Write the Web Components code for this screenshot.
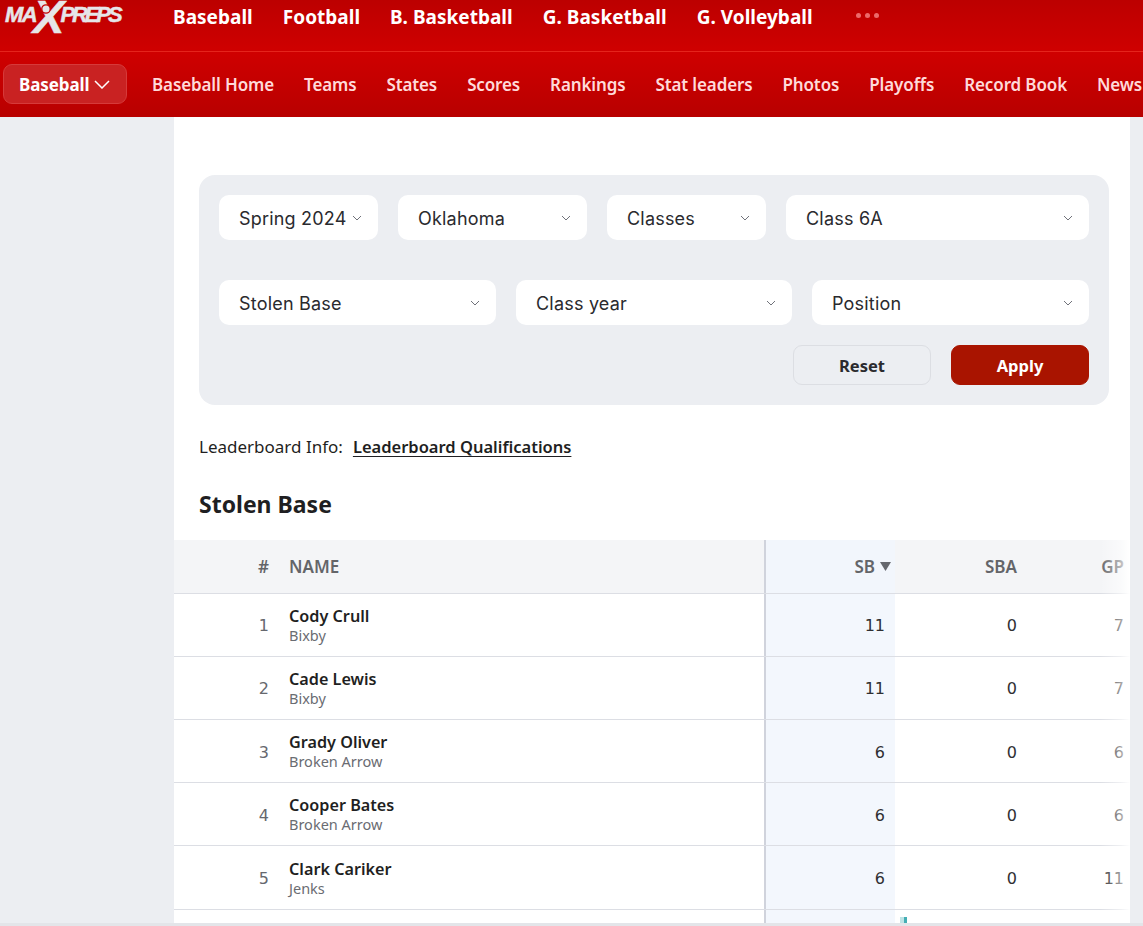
<!DOCTYPE html>
<html lang="en"><head><meta charset="utf-8"><title>Stolen Base</title>
<style>
html,body{margin:0;padding:0;height:926px;overflow:hidden;background:#eceef2;font-family:"Noto Sans",sans-serif}
body{display:flex;flex-direction:column}
</style></head><body>
<mp-header></mp-header>
<mp-layout>
  <mp-filters></mp-filters>
  <mp-info></mp-info>
  <mp-table></mp-table>
</mp-layout>
<script>
const def=(name,html)=>customElements.define(name,class extends HTMLElement{
  connectedCallback(){ if(this.shadowRoot)return; const r=this.attachShadow({mode:'open'}); r.innerHTML=typeof html==='function'?html(this):html; }
});
def('mp-logo',`<style>
:host{display:flex;flex:none;width:122px;height:36px;position:relative;margin-left:5px;color:#e6e6e8;align-items:flex-start;white-space:nowrap;font:italic 700 22px/18px "Liberation Sans",sans-serif;-webkit-text-stroke:.5px #e6e6e8}
.s{margin-top:6px;letter-spacing:-1.6px}
.p{letter-spacing:-3.1px}
.x{font-size:47px;line-height:34px;height:34px;margin:0 -4px 0 -3px;letter-spacing:0}
svg{position:absolute;left:35px;top:3px}
</style><span class="s">MA</span><span class="x">X</span><span class="s p">PREPS</span><svg width="12" height="12" viewBox="0 0 12 12"><circle cx="6" cy="6" r="4.200" fill="#e6e6e8" stroke="#c40404" stroke-width="1.300"/></svg>`);
def('mp-header',`<style>
:host{display:block;height:117px;flex:none;color:#fff;font-family:"Noto Sans",sans-serif}
.top{height:52px;box-sizing:border-box;display:flex;align-items:flex-start;background:linear-gradient(#bc0000,#cf0000);border-bottom:1px solid #e5241c}
.links{display:flex;gap:30px;margin-left:46px;font-size:19px;font-weight:700;line-height:34px;white-space:nowrap;letter-spacing:.02px}
.dots{display:flex;gap:4px;margin:13px 0 0 43px}
.dots i{width:5px;height:5px;border-radius:50%;background:#ec6a6a}
.sub{height:65px;box-sizing:border-box;display:flex;align-items:center;background:linear-gradient(#cf0000,#b80000);padding-left:3px;white-space:nowrap;overflow:hidden}
.btn{flex:none;width:124px;height:40px;box-sizing:border-box;border:1px solid #d63a3a;background:#c92222;border-radius:9px;display:flex;align-items:center;padding:1px 0 0 15px;margin-bottom:1px;gap:5px;font-size:17px;font-weight:700;color:#fff;letter-spacing:-.1px}
.nav{display:flex;gap:30px;margin-left:25px;font-size:17px;font-weight:600;color:#ffdada;letter-spacing:-.13px;line-height:24px;padding-top:1px}
</style>
<div class="top"><mp-logo></mp-logo><div class="links"><span>Baseball</span><span>Football</span><span>B. Basketball</span><span>G. Basketball</span><span>G. Volleyball</span></div><div class="dots"><i></i><i></i><i></i></div></div>
<div class="sub"><div class="btn">Baseball<svg width="16" height="9" viewBox="0 0 16 9" fill="none" stroke="#fff" stroke-width="1.5"><path d="M1 1l7 7 7-7"/></svg></div><div class="nav"><span>Baseball Home</span><span>Teams</span><span>States</span><span>Scores</span><span>Rankings</span><span>Stat leaders</span><span>Photos</span><span>Playoffs</span><span>Record Book</span><span>News</span></div></div>`);
def('mp-layout',`<style>
:host{display:block;flex:1;min-height:0;position:relative;background:#eceef2}
.main{margin-left:174px;width:956px;height:809px;background:#fff;box-sizing:border-box;padding-top:58px;overflow:hidden}
.line{position:absolute;left:0;right:0;bottom:0;height:3px;background:#e3e5e9}
</style><div class="main"><slot></slot></div><div class="line"></div>`);
def('mp-select',`<style>
:host{display:flex;height:45px;box-sizing:border-box;background:#fff;border-radius:10px;align-items:center;justify-content:space-between;padding:2px 16px 0 20px;font:400 18px "Inter",sans-serif;color:#2a2a2e;white-space:nowrap;min-width:0;letter-spacing:.2px}
svg{flex:none;margin-top:-2px}
</style><span><slot></slot></span><svg width="10" height="6" viewBox="0 0 10 6" fill="none" stroke="#70727a" stroke-width="1"><path d="M1 1l4 4 4-4"/></svg>`);
def('mp-button',`<style>
:host{display:flex;width:138px;height:40px;box-sizing:border-box;border-radius:9px;align-items:center;justify-content:center;padding-top:1px;font:700 16.5px "Noto Sans",sans-serif;border:1px solid #dcdee3;color:#2a2a2e}
:host([primary]){background:#a91400;border-color:#a91400;color:#fff}
</style><slot></slot>`);
def('mp-filters',`<style>
:host{display:block;margin:0 21px 0 25px;background:#eceef2;border-radius:16px;padding:20px;height:230px;box-sizing:border-box}
.r1{display:grid;grid-template-columns:159px 189px 159px 303px;gap:20px}
.r2{display:grid;grid-template-columns:277px 276px 277px;gap:20px;margin-top:40px}
.b{display:flex;justify-content:flex-end;gap:20px;margin-top:20px}
</style>
<div class="r1"><mp-select>Spring 2024</mp-select><mp-select>Oklahoma</mp-select><mp-select>Classes</mp-select><mp-select>Class 6A</mp-select></div>
<div class="r2"><mp-select>Stolen Base</mp-select><mp-select>Class year</mp-select><mp-select>Position</mp-select></div>
<div class="b"><mp-button>Reset</mp-button><mp-button primary>Apply</mp-button></div>`);
def('mp-info',`<style>
:host{display:block;padding:30px 25px 0;color:#1f1f22}
.l{font-size:17px;line-height:24px;display:flex;gap:10px}
a{font-size:16.5px;font-weight:600;color:#1f1f22;text-decoration:underline;text-underline-offset:3px}
h2{margin:30px 0 0;font-size:23px;line-height:30px;font-weight:700}
</style><div class="l"><span>Leaderboard Info:</span><a>Leaderboard Qualifications</a></div><h2>Stolen Base</h2>`);
def('mp-row',el=>{const d=el.dataset;const hd=el.hasAttribute('head');return `<style>
:host{display:grid;grid-template-columns:95px 20px 475px 2px 129px 122px 107px 6px;height:63.2px;box-sizing:border-box;border-bottom:1px solid #dcdee4;position:relative}
:host([head]){height:53.7px;background:#f4f5f7}
.c{display:flex;align-items:center;justify-content:flex-end;padding-top:2px;font:400 16px "DejaVu Sans",sans-serif;color:#2f2f33}
.n{color:#66686e}
.nm{display:flex;flex-direction:column;justify-content:center;grid-column:3;padding-top:1px}
b{font:600 16.2px/20px "Noto Sans",sans-serif;color:#1f1f22}
small{font:400 14.5px/19px "Noto Sans",sans-serif;color:#6a6c72}
.dv{background:#d0d3dc;grid-column:4}
.sb{background:#f3f7fd;padding-right:10px}
.h{font:600 17px "Noto Sans",sans-serif;color:#646569;padding-top:0}
.nm.hh{padding-top:0}
.sb.h{background:#f2f6fc;padding-right:4px;gap:5px}
.mk{position:absolute;left:726px;top:7px;width:7px;height:9px;background:linear-gradient(90deg,#bfe4e6 60%,#45aeb4 60%)}
</style>`+(hd?`<div class="c h">#</div><div class="nm hh"><span class="h">NAME</span></div><div class="dv"></div><div class="c h sb">SB<svg width="11" height="9" viewBox="0 0 11 9"><path d="M0 0h11L5.500 9z" fill="#66686e"/></svg></div><div class="c h">SBA</div><div class="c h">GP</div>`
:`<div class="c n">${d.r||''}</div><div class="nm"><b>${d.name||''}</b><small>${d.school||''}</small></div><div class="dv"></div><div class="c sb">${d.sb||''}</div><div class="c">${d.sba||''}</div><div class="c">${d.gp||''}</div>${el.hasAttribute('mark')?'<div class="mk"></div>':''}`)});
const rows=[[1,'Cody Crull','Bixby',11,0,7],[2,'Cade Lewis','Bixby',11,0,7],[3,'Grady Oliver','Broken Arrow',6,0,6],[4,'Cooper Bates','Broken Arrow',6,0,6],[5,'Clark Cariker','Jenks',6,0,11]];
def('mp-table',`<style>
:host{display:block;margin-top:21px;position:relative}
.fade{position:absolute;right:0;top:0;bottom:0;width:30px;background:linear-gradient(90deg,rgba(255,255,255,0),rgba(255,255,255,.55) 70%,#fff)}
</style><mp-row head></mp-row>`+rows.map(r=>`<mp-row data-r="${r[0]}" data-name="${r[1]}" data-school="${r[2]}" data-sb="${r[3]}" data-sba="${r[4]}" data-gp="${r[5]}"></mp-row>`).join('')+`<mp-row mark></mp-row><div class="fade"></div>`);
</script>
</body></html>
